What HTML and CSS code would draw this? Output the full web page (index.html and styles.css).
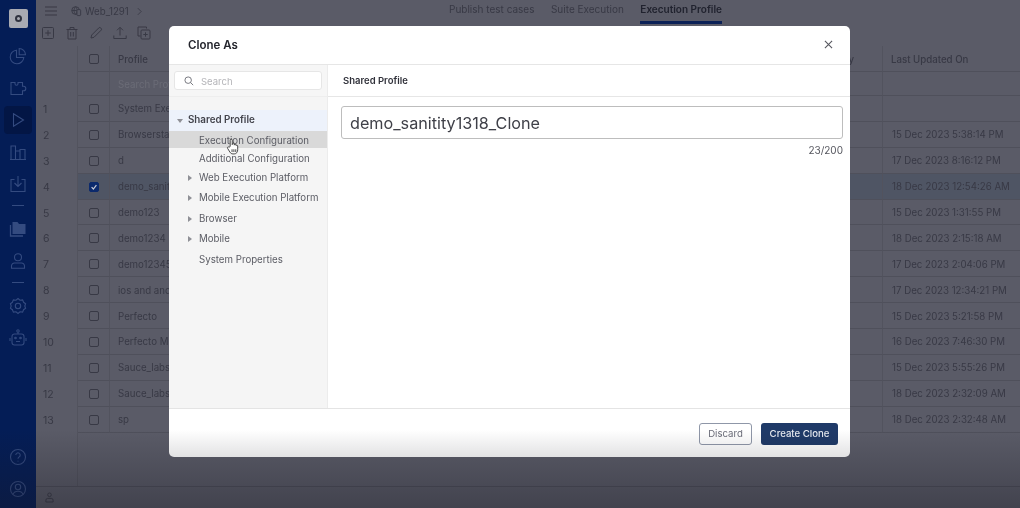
FILE: index.html
```html
<!DOCTYPE html>
<html lang="en">
<head>
<meta charset="utf-8">
<title>Clone As</title>
<link rel="stylesheet" href="styles.css">
</head>
<body>
<div class="app">
  <nav class="rail">
    <div class="logo"><span class="logo-ring"></span></div>
    <div class="rail-item"><svg class="ri" viewBox="0 0 18 18"><path d="M7.500 3.200a6.800 6.800 0 1 0 7.300 7.300H7.500z"/><path d="M10.200 1.500v6.300h6.300a6.400 6.400 0 0 0-6.300-6.300z"/></svg></div>
    <div class="rail-item"><svg class="ri" viewBox="0 0 18 18"><path d="M2 3.500h4v1.200a1.500 1.500 0 0 0 3 0V3.500h4.500v3.700h1a2 2 0 0 1 0 4.600h-1v3.700H2z"/></svg></div>
    <div class="rail-item active"><svg class="ri" viewBox="0 0 18 18"><path d="M4.500 2.800 14.500 9l-10 6.200z"/></svg></div>
    <div class="rail-item"><svg class="ri" viewBox="0 0 18 18"><path d="M2 16V3h4.500v13M6.500 16V8h4.500v8M11 16V6.500h5V16M1 16.500h16"/></svg></div>
    <div class="rail-item"><svg class="ri" viewBox="0 0 18 18"><path d="M5.500 4.500H2v12h14v-12h-3.500M9 1v10M5.500 8 9 11.500 12.500 8"/></svg></div>
    <div class="rail-sep first"></div>
    <div class="rail-item"><svg class="ri filled" viewBox="0 0 18 18"><path d="M3.500 2h5l1.500 2h6.500v10h-13z"/><path class="thin" d="M1.500 5v11h12.500"/></svg></div>
    <div class="rail-item"><svg class="ri" viewBox="0 0 18 18"><circle cx="9" cy="5.200" r="3.500"/><path d="M2.500 16.200v-2.200a3 3 0 0 1 3-3h7a3 3 0 0 1 3 3v2.200z"/></svg></div>
    <div class="rail-sep"></div>
    <div class="rail-item"><svg class="ri" viewBox="0 0 18 18"><circle cx="9" cy="9" r="2.700"/><path d="m9 1.500 2 1.700 2.600-.3 1 2.400 2 1.500-.8 2.200.8 2.200-2 1.500-1 2.400-2.600-.3-2 1.700-2-1.700-2.600.3-1-2.400-2-1.500.8-2.200-.8-2.200 2-1.500 1-2.400 2.600.3z"/></svg></div>
    <div class="rail-item"><svg class="ri" viewBox="0 0 18 18"><circle cx="9" cy="2" r="1.200"/><path d="M9 3.200V5M3 7.500a2.500 2.500 0 0 1 2.500-2.500h7A2.500 2.500 0 0 1 15 7.500v6a2.500 2.500 0 0 1-2.500 2.500h-7A2.500 2.500 0 0 1 3 13.500zM1 9v3M17 9v3M7 12.500h4"/><circle cx="6.500" cy="9" r=".8"/><circle cx="11.500" cy="9" r=".8"/></svg></div>
    <div class="rail-spacer"></div>
    <div class="rail-item"><svg class="ri" viewBox="0 0 18 18"><circle cx="9" cy="9" r="7.500"/><path d="M6.800 7a2.200 2.200 0 1 1 3.400 1.900c-.8.500-1.200 1-1.200 1.900M9 12.800v.6"/></svg></div>
    <div class="rail-item"><svg class="ri" viewBox="0 0 18 18"><circle cx="9" cy="9" r="7.500"/><circle cx="9" cy="7" r="2.700"/><path d="M4 14.200c.8-2 2.700-3 5-3s4.200 1 5 3"/></svg></div>
  </nav>

  <main class="main">
    <header class="topbar">
      <div class="crumbs">
        <svg class="ti menu" viewBox="0 0 12 10"><path d="M0 1h12M0 5h12M0 9h12"/></svg>
        <svg class="ti globe" viewBox="0 0 12 12"><circle cx="5" cy="5.500" r="4.200"/><path d="M1 5.500h8M5 1.300c-2.200 2.500-2.200 5.900 0 8.400M5 1.300c2.200 2.500 2.200 5.900 0 8.400"/><rect class="solid" x="6.500" y="4.500" width="4" height="6.500" rx=".8"/></svg>
        <span class="crumb-text">Web_1291</span>
        <svg class="ti chev" viewBox="0 0 6 10"><path d="m1 1 4 4-4 4"/></svg>
      </div>
      <div class="tabs">
        <span class="tab">Publish test cases</span>
        <span class="tab">Suite Execution</span>
        <span class="tab current">Execution Profile</span>
      </div>
    </header>

    <div class="toolbar">
      <svg class="tool" viewBox="0 0 14 14"><rect x="1.500" y="1.500" width="11" height="11" rx="1"/><path d="M7 4.200v5.600M4.200 7h5.600"/></svg>
      <svg class="tool" viewBox="0 0 14 14"><path d="M1.500 3.500h11M5 3.500V1.500h4v2M3 3.500v9.500h8V3.500M5.700 6v4.500M8.300 6v4.500"/></svg>
      <svg class="tool" viewBox="0 0 14 14"><path d="m2 12 .7-3L9.800 1.900a1.300 1.300 0 0 1 1.900 0l.4.400a1.300 1.300 0 0 1 0 1.900L5 11.300z"/></svg>
      <svg class="tool" viewBox="0 0 14 14"><path d="M7 9.500V1.500M4 4.300l3-3 3 3M.8 9.500v3h12.400v-3"/></svg>
      <svg class="tool" viewBox="0 0 14 14"><path d="M9.500 2.500V1H1v9h2.500"/><rect x="4" y="4" width="9" height="9" rx="1"/><path d="M8.500 6.300v4.400M6.300 8.500h4.400"/></svg>
    </div>

    <section class="table">
      <div class="row head">
        <div class="cell num"></div>
        <div class="cell chk"><span class="box"></span></div>
        <div class="cell name">Profile</div>
        <div class="cell by">Updated By</div>
        <div class="cell date">Last Updated On</div>
      </div>
      <div class="row filter">
        <div class="cell num"></div>
        <div class="cell chk"></div>
        <div class="cell name"><span class="filter-text">Search Profile</span></div>
        <div class="cell by"></div>
        <div class="cell date"></div>
      </div>
      <div class="row"><div class="cell num">1</div><div class="cell chk"><span class="box"></span></div><div class="cell name">System Execution</div><div class="cell by"></div><div class="cell date"></div></div>
      <div class="row"><div class="cell num">2</div><div class="cell chk"><span class="box"></span></div><div class="cell name">Browserstack</div><div class="cell by"></div><div class="cell date">15 Dec 2023 5:38:14 PM</div></div>
      <div class="row"><div class="cell num">3</div><div class="cell chk"><span class="box"></span></div><div class="cell name">d</div><div class="cell by"></div><div class="cell date">17 Dec 2023 8:16:12 PM</div></div>
      <div class="row picked"><div class="cell num">4</div><div class="cell chk"><span class="box on"><svg viewBox="0 0 10 10"><path d="m2 5.200 2.200 2.300L8 2.700"/></svg></span></div><div class="cell name">demo_sanity1318</div><div class="cell by"></div><div class="cell date">18 Dec 2023 12:54:26 AM</div></div>
      <div class="row"><div class="cell num">5</div><div class="cell chk"><span class="box"></span></div><div class="cell name">demo123</div><div class="cell by"></div><div class="cell date">15 Dec 2023 1:31:55 PM</div></div>
      <div class="row"><div class="cell num">6</div><div class="cell chk"><span class="box"></span></div><div class="cell name">demo1234</div><div class="cell by"></div><div class="cell date">18 Dec 2023 2:15:18 AM</div></div>
      <div class="row"><div class="cell num">7</div><div class="cell chk"><span class="box"></span></div><div class="cell name">demo12345</div><div class="cell by"></div><div class="cell date">17 Dec 2023 2:04:06 PM</div></div>
      <div class="row"><div class="cell num">8</div><div class="cell chk"><span class="box"></span></div><div class="cell name">ios and android</div><div class="cell by"></div><div class="cell date">17 Dec 2023 12:34:21 PM</div></div>
      <div class="row"><div class="cell num">9</div><div class="cell chk"><span class="box"></span></div><div class="cell name">Perfecto</div><div class="cell by"></div><div class="cell date">15 Dec 2023 5:21:58 PM</div></div>
      <div class="row"><div class="cell num">10</div><div class="cell chk"><span class="box"></span></div><div class="cell name">Perfecto Mobile</div><div class="cell by"></div><div class="cell date">16 Dec 2023 7:46:30 PM</div></div>
      <div class="row"><div class="cell num">11</div><div class="cell chk"><span class="box"></span></div><div class="cell name">Sauce_labs</div><div class="cell by"></div><div class="cell date">15 Dec 2023 5:55:26 PM</div></div>
      <div class="row"><div class="cell num">12</div><div class="cell chk"><span class="box"></span></div><div class="cell name">Sauce_labs_2</div><div class="cell by"></div><div class="cell date">18 Dec 2023 2:32:09 AM</div></div>
      <div class="row"><div class="cell num">13</div><div class="cell chk"><span class="box"></span></div><div class="cell name">sp</div><div class="cell by"></div><div class="cell date">18 Dec 2023 2:32:48 AM</div></div>
      <div class="table-rest"></div>
    </section>

    <footer class="statusbar">
      <svg class="ti person" viewBox="0 0 10 12"><circle cx="5" cy="3" r="2"/><path d="M1 11V9a2 2 0 0 1 2-2h4a2 2 0 0 1 2 2v2z"/></svg>
    </footer>
  </main>

  <div class="modal">
    <div class="modal-head">
      <h2 class="modal-title">Clone As</h2>
      <svg class="close" viewBox="0 0 10 10"><path d="m1 1 8 8M9 1 1 9"/></svg>
    </div>
    <div class="modal-body">
      <aside class="pane">
        <div class="pane-search">
          <div class="search">
            <svg class="search-icon" viewBox="0 0 12 12"><circle cx="5" cy="5" r="3.900"/><path d="m8 8 3 3"/></svg>
            <span>Search</span>
          </div>
        </div>
        <ul class="tree">
          <li class="node root"><span class="arrow down"></span>Shared Profile</li>
          <li class="node selected">Execution Configuration</li>
          <li class="node add">Additional Configuration</li>
          <li class="node web"><span class="arrow"></span>Web Execution Platform</li>
          <li class="node"><span class="arrow"></span>Mobile Execution Platform</li>
          <li class="node"><span class="arrow"></span>Browser</li>
          <li class="node"><span class="arrow"></span>Mobile</li>
          <li class="node">System Properties</li>
        </ul>
      </aside>
      <section class="detail">
        <div class="detail-head">Shared Profile</div>
        <div class="detail-form">
          <div class="name-input">demo_sanitity1318_Clone</div>
          <div class="counter">23/200</div>
        </div>
      </section>
    </div>
    <div class="modal-foot">
      <button class="btn ghost">Discard</button>
      <button class="btn primary">Create Clone</button>
    </div>
  </div>

  <svg class="cursor" viewBox="0 0 14 18"><path d="M4.500 9V2.200a1.100 1.100 0 0 1 2.200 0V7l.3-1a1 1 0 0 1 1.900.3V7.500a1 1 0 0 1 1.900 0V8a1 1 0 0 1 1.800.4v4c0 2.500-1.300 4.600-3.800 4.600H7.500c-1.600 0-2.500-.8-3.300-2L1.700 11c-.7-1 .7-2.200 1.600-1.200z"/><path d="M6.500 12v3M8.500 12v3M10.500 12v3"/></svg>
  <div class="vignette"></div>
</div>
</body>
</html>
```

FILE: styles.css
```css
* { box-sizing: border-box; }
html, body { margin: 0; padding: 0; background: #5a5b67; }
body { font-family: Inter, "Liberation Sans", sans-serif; color: #383945; }

.app {
  position: relative;
  display: flex;
  width: 1020px;
  height: 508px;
  overflow: hidden;
  background: #5a5b67;
  filter: blur(.4px);
}

/* left rail */
.rail {
  flex: none;
  width: 36px;
  display: flex;
  flex-direction: column;
  align-items: center;
  padding: 9px 0 3px;
  background: #041d56;
}
.logo {
  flex: none;
  width: 19px;
  height: 19px;
  margin-bottom: 12px;
  border-radius: 2px;
  background: #a9abb2;
  display: flex;
  align-items: center;
  justify-content: center;
}
.logo-ring {
  width: 7px;
  height: 7px;
  border: 2px solid #30333f;
  border-radius: 50%;
}
.rail-item {
  flex: none;
  width: 28px;
  height: 32px;
  display: flex;
  align-items: center;
  justify-content: center;
  border-radius: 4px;
}
.rail-item.active { height: 28px; margin: 2px 0; background: #031645; }
.ri { width: 18px; height: 18px; fill: none; stroke: #344b80; stroke-width: 1.100; }
.ri.filled path { fill: #344b80; stroke: none; }
.ri.filled path.thin { fill: none; stroke: #344b80; stroke-width: 1.300; }
.rail-sep { flex: none; width: 12px; height: 1px; margin: 5px 0 7px; background: #344b80; }
.rail-sep.first { margin: 5px 0 7px; }
.rail-spacer { flex: 1; }

/* main */
.main { flex: 1; min-width: 0; display: flex; flex-direction: column; }

.topbar { flex: none; position: relative; height: 24px; display: flex; }
.crumbs { display: flex; align-items: center; height: 22px; padding-left: 9px; }
.ti { fill: none; stroke: #383945; stroke-width: 1; flex: none; }
.menu { width: 12px; height: 10px; margin-right: 14px; }
.globe { width: 11px; height: 12px; margin-right: 3px; }
.globe .solid { fill: #5a5b67; }
.crumb-text { font-size: 9.700px; }
.chev { width: 5px; height: 9px; margin-left: 8px; }
.tabs { position: absolute; left: 413px; top: 0; display: flex; gap: 16.500px; }
.tab { height: 24px; padding-top: 3px; font-size: 10px; line-height: 13px; color: #383945; }
.tab.current { font-weight: 600; color: #20222e; border-bottom: 3px solid #0b2156; }

.toolbar { flex: none; height: 22px; display: flex; gap: 10px; padding: 2px 0 0 5px; }
.tool { flex: none; width: 14px; height: 14px; fill: none; stroke: #383945; stroke-width: 1; }

.table { flex: 1; min-height: 0; display: flex; flex-direction: column; }
.row {
  flex: none;
  height: 25.900px;
  display: grid;
  grid-template-columns: 42px 32px 1fr 60px 137px;
  font-size: 9.700px;
}
.row.head { height: 26px; font-weight: 500; }
.row.filter { height: 24px; }
.row.picked { background: #4f5564; }
.row.picked .num { background: #5a5b67; }
.cell { display: flex; align-items: center; min-width: 0; padding-top: 1px; white-space: nowrap; border-bottom: 1px solid #4f505b; }
.num { padding-left: 7px; border-bottom: 0; border-right: 1px solid #52535e; font-size: 10.500px; }
.chk { justify-content: center; padding-left: 1px; border-right: 1px solid #52535e; }
.head .chk { padding-left: 0; }
.name { padding-left: 8px; }
.by { justify-content: flex-end; padding-right: 28px; border-right: 1px solid #52535e; }
.date { padding-left: 9px; }
.head .date { padding-left: 8px; }
.filter-text { color: #6b6c77; }
.box { width: 10px; height: 10px; border: 1px solid #383945; border-radius: 2px; display: block; }
.box.on { background: #0c2a6c; border-color: #0c2a6c; }
.box.on svg { display: block; width: 8px; height: 8px; fill: none; stroke: #c7cad4; stroke-width: 1.500; }
.table-rest { flex: 1; width: 43px; border-right: 1px solid #52535e; margin-left: -1px; }

.statusbar { flex: none; height: 22px; display: flex; align-items: center; padding-left: 9px; border-top: 1px solid #4c4d58; }
.person { width: 9px; height: 11px; }

/* modal */
.modal {
  position: absolute;
  left: 169px;
  top: 26px;
  width: 681px;
  height: 431px;
  display: flex;
  flex-direction: column;
  background: #fff;
  border-radius: 5px;
  overflow: hidden;
  color: #2a2b33;
}
.modal-head {
  flex: none;
  height: 39px;
  display: flex;
  align-items: center;
  justify-content: space-between;
  padding: 0 17px 1px 19px;
  border-bottom: 1px solid #e6e6e6;
}
.modal-title { margin: 0; font-size: 11.500px; font-weight: 600; color: #23242c; }
.close { width: 9px; height: 9px; fill: none; stroke: #55565e; stroke-width: 1.200; }
.modal-body { flex: 1; min-height: 0; display: flex; }
.pane { flex: none; width: 159px; background: #f5f5f5; border-right: 1px solid #ececec; }
.pane-search { height: 32px; padding: 6px 5px 0; border-bottom: 1px solid #eeeeee; background: #f6f6f6; }
.search {
  height: 19px;
  display: flex;
  align-items: center;
  gap: 7px;
  padding: 1px 0 0 9px;
  background: #fff;
  border: 1px solid #e6e6e6;
  border-radius: 3px;
  font-size: 9.500px;
  color: #b4b4b8;
}
.search-icon { width: 10px; height: 10px; fill: none; stroke: #60616a; stroke-width: 1; }
.tree { list-style: none; margin: 13px 0 0; padding: 0; }
.node {
  position: relative;
  height: 20.500px;
  padding: 1px 0 0 30px;
  font-size: 9.700px;
  line-height: 20px;
  color: #5b5c64;
  white-space: nowrap;
}
.node.root { height: 21px; padding: 0 0 0 19px; font-size: 9.800px; font-weight: 600; color: #43444c; background: #edf2fb; }
.node.selected { height: 17px; line-height: 17px; background: #d9d9d9; }
.node.add { height: 19px; line-height: 19px; }
.node.web { height: 20px; }
.arrow {
  position: absolute;
  left: 19px;
  top: 8px;
  width: 0;
  height: 0;
  border-left: 4px solid #8f9096;
  border-top: 3px solid transparent;
  border-bottom: 3px solid transparent;
}
.arrow.down {
  left: 8px;
  top: 9px;
  border-left: 3px solid transparent;
  border-right: 3px solid transparent;
  border-top: 4px solid #8f9096;
  border-bottom: 0;
}
.detail { flex: 1; min-width: 0; display: flex; flex-direction: column; }
.detail-head {
  flex: none;
  height: 32px;
  padding: 10px 0 0 15px;
  font-size: 9.500px;
  line-height: 12px;
  font-weight: 600;
  color: #30313a;
  border-bottom: 1px solid #e6e6e6;
}
.detail-form { padding: 9px 7px 0 13px; }
.name-input {
  height: 33px;
  padding-left: 8px;
  font-size: 16.200px;
  line-height: 33px;
  color: #3f4048;
  border: 1px solid #bdbdbd;
  border-radius: 3px;
}
.counter { margin-top: 5px; text-align: right; font-size: 10px; line-height: 12px; color: #55565e; }
.modal-foot {
  flex: none;
  height: 49px;
  display: flex;
  justify-content: flex-end;
  gap: 9px;
  padding: 14px 12px 0 0;
  border-top: 1px solid #e4e4e4;
}
.btn {
  height: 22px;
  padding: 0 0 2px;
  font-family: inherit;
  font-size: 9.600px;
  border-radius: 3px;
}
.btn.ghost { width: 53px; background: #fff; border: 1px solid #8f97a8; color: #6a6c78; }
.btn.primary { width: 77px; background: #1f3a68; border: 0; color: #e9ecf2; font-weight: 500; }

.cursor {
  position: absolute;
  left: 226px;
  top: 138px;
  width: 13px;
  height: 17px;
  fill: #fff;
  stroke: #3a3a3a;
  stroke-width: 1;
}
.vignette {
  position: absolute;
  left: 0;
  right: 0;
  bottom: 0;
  height: 78px;
  background: linear-gradient(to bottom, rgba(24, 24, 34, 0), rgba(24, 24, 34, .36));
  pointer-events: none;
}
```
